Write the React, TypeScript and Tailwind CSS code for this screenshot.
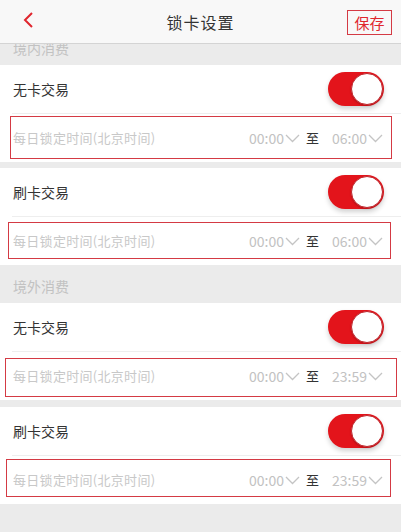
import React from 'react';

const font = { fontFamily: '"Noto Sans CJK SC", "Noto Sans", sans-serif' };

const Chevron = () => (
  <svg width="15" height="9" viewBox="0 0 15 9" className="ml-[1px]">
    <path d="M1 1 L7.5 7.5 L14 1" fill="none" stroke="#c4c4c4" strokeWidth="1.3" />
  </svg>
);

const Toggle = () => (
  <div className="relative w-[56px] h-[34px] rounded-full bg-[#e3141b] shadow-[0_3px_5px_rgba(0,0,0,0.18)]">
    <div className="absolute right-[1px] top-[1px] w-[32px] h-[32px] rounded-full bg-white border border-[#c0262c] shadow-[0_1px_2px_rgba(0,0,0,0.2)]" />
  </div>
);

type Card = { label: string; end: string; box: string };

const CardRow = ({ label, end, box }: Card) => (
  <div className="bg-white">
    <div className="h-[48px] flex items-center justify-between pl-[13px] pr-[17px]">
      <span className="text-[14px] text-[#333]">{label}</span>
      <Toggle />
    </div>
    <div className="ml-[12px] h-px bg-[#eeeeee]" />
    <div className="relative h-[48px] flex items-center pl-[13px] pr-[18px]">
      <span className="text-[13px] text-[#c8c8c8] flex-1 tracking-[0.3px]">每日锁定时间(北京时间)</span>
      <span className="text-[14px] text-[#c2c2c2]">00:00</span>
      <Chevron />
      <span className="text-[13px] text-[#333] ml-[6px] mr-[13px]">至</span>
      <span className="text-[14px] text-[#c2c2c2]">{end}</span>
      <Chevron />
      <div className={`absolute border border-[#d43a44] ${box}`} />
    </div>
  </div>
);

export default function App() {
  return (
    <div className="w-[401px] h-[532px] overflow-hidden bg-[#ebebeb]" style={font}>
      <div className="relative z-10 h-[44px] bg-[#f8f8f8] border-b border-[#d4d4d4] flex items-center justify-center">
        <svg width="12" height="16" viewBox="0 0 12 16" className="absolute left-[22px] top-[12px]">
          <path d="M10 1 L3 8 L10 15" fill="none" stroke="#e0262e" strokeWidth="2" />
        </svg>
        <span className="text-[16px] text-[#333] tracking-[1px]">锁卡设置</span>
        <div className="absolute left-[347px] top-[10px] w-[45px] h-[25px] border border-[#d43a44] flex items-center justify-center">
          <span className="text-[15px] text-[#e0262e] leading-none">保存</span>
        </div>
      </div>

      <div className="-mt-[17px] flex flex-col">
        <div className="h-[38px] pl-[13px] pt-[11px] text-[14px] text-[#c2c2c2]">境内消费</div>
        <CardRow label="无卡交易" end="06:00" box="left-[10px] right-[9px] top-[2px] bottom-[3px]" />
        <div className="h-[6px]" />
        <CardRow label="刷卡交易" end="06:00" box="left-[8px] right-[10px] top-[5px] bottom-[6px]" />
        <div className="h-[38px] pl-[13px] pt-[11px] text-[14px] text-[#c2c2c2]">境外消费</div>
        <CardRow label="无卡交易" end="23:59" box="left-[5px] right-[4px] top-[6px] bottom-[3px]" />
        <div className="h-[7px]" />
        <CardRow label="刷卡交易" end="23:59" box="left-[6px] right-[10px] top-[3px] bottom-[7px]" />
      </div>
    </div>
  );
}
